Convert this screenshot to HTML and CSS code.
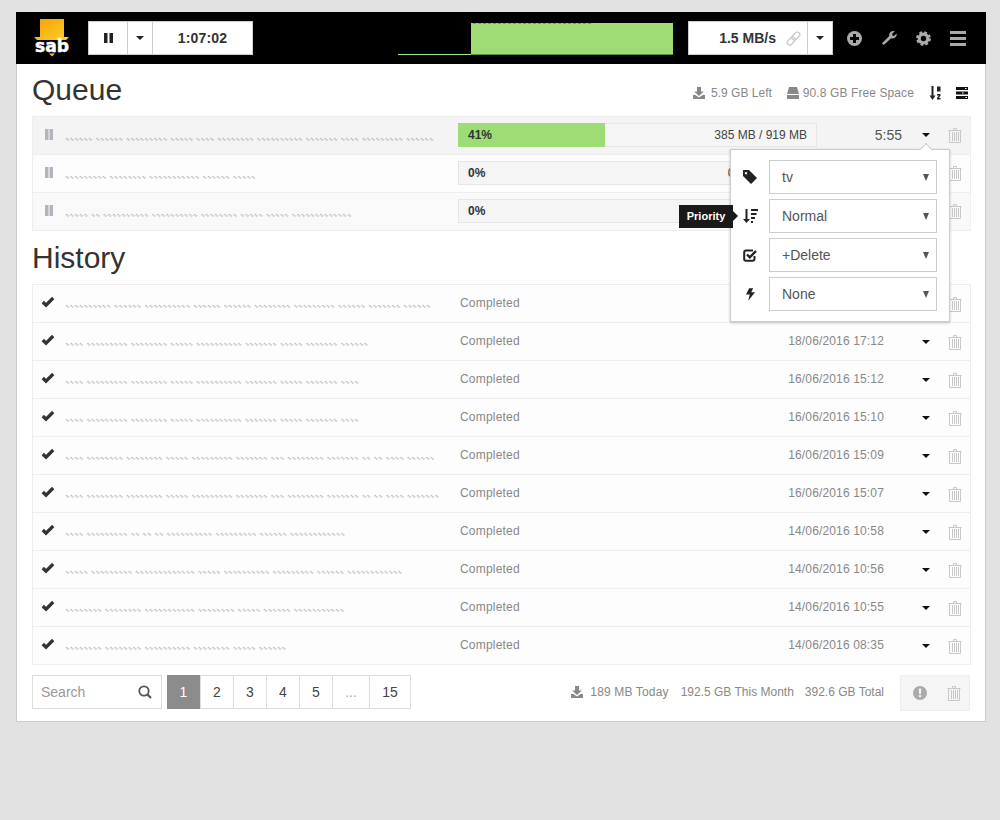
FILE: index.html
```html
<!DOCTYPE html>
<html lang="en">
<head>
<meta charset="utf-8">
<title>SABnzbd</title>
<link rel="stylesheet" href="styles.css">
</head>
<body>
<svg class="defs" width="0" height="0" aria-hidden="true">
  <symbol id="i-trash" viewBox="0 0 14 16"><path d="M5.500 3V1.500h3V3M.5 3.500h13M1.500 4v11.500h11V4M4.500 5v9M6.500 5v9M8.500 5v9M10.500 5v9" fill="none" stroke="currentColor"/></symbol>
  <symbol id="i-caret" viewBox="0 0 8 4"><path d="M0 0h8L4 4z" fill="currentColor"/></symbol>
  <symbol id="i-pause" viewBox="0 0 9 10"><path d="M0 0h3.500v10H0zM5.500 0H9v10H5.500z" fill="currentColor"/></symbol>
  <symbol id="i-qpause" viewBox="0 0 8 11"><path d="M0 0h3.500v11H0zM4.500 0H8v11H4.500z" fill="currentColor"/></symbol>
  <symbol id="i-check" viewBox="0 0 14 12"><path d="M1.800 6 5 9.200 12.200 2" fill="none" stroke="currentColor" stroke-width="3.200"/></symbol>
  <symbol id="i-download" viewBox="0 0 12 12"><path d="M4 0h4v4.500h2.800L6 9 1.200 4.500H4zM0 8h2.500L6 10.500 9.500 8H12v4H0z" fill="currentColor"/></symbol>
</svg>
<div class="app">
  <nav class="nav">
    <div class="logo">
      <svg width="38" height="40" viewBox="0 0 38 40">
        <defs><linearGradient id="g" x1="0" x2="1" y1="0" y2="1"><stop offset="0" stop-color="#f5a200"/><stop offset="1" stop-color="#ffcf2c"/></linearGradient></defs>
        <path d="M6 1h24v18h5l-3 3H3l-3-3h6z" fill="url(#g)"/>
        <rect x="0" y="23" width="36" height="12" fill="#000"/>
        <path d="M15 35.500h6l-3 3z" fill="#ffc21e"/>
        <text class="logo-text" x="1" y="34" textLength="34" lengthAdjust="spacingAndGlyphs">sab</text>
      </svg>
    </div>
    <div class="btn-group">
      <span class="btn btn-pause"><svg width="9" height="10"><use href="#i-pause"/></svg></span>
      <span class="btn btn-caret"><svg width="8" height="4"><use href="#i-caret"/></svg></span>
      <span class="btn btn-time">1:07:02</span>
    </div>
    <svg class="graph" width="276" height="32" viewBox="0 0 276 32"><path d="M73 31.500V0H275v31.500z" fill="#9fdc75"/><path d="M0 31.500h73" stroke="#a6e58f"/><path d="M73 31.500H275" stroke="#5f8f45"/><path d="M75 .5H195" stroke="#6f9f55" stroke-dasharray="3 2"/></svg>
    <div class="btn-group speed">
      <span class="btn btn-speed">1.5 MB/s
        <svg class="link" width="15" height="15" viewBox="0 0 15 15"><g fill="none" stroke="#ccc" stroke-width="1.400"><rect x="7.300" y="0.500" width="5" height="9" rx="2.500" transform="rotate(45 9.800 5)"/><rect x="2.700" y="5.500" width="5" height="9" rx="2.500" transform="rotate(45 5.200 10)"/></g></svg>
      </span>
      <span class="btn btn-caret2"><svg width="8" height="4"><use href="#i-caret"/></svg></span>
    </div>
    <div class="nav-icons">
      <svg width="15" height="15" viewBox="0 0 15 15"><circle cx="7.500" cy="7.500" r="7.500" fill="#aaa"/><path d="M6 3h3v3h3v3H9v3H6V9H3V6h3z" fill="#000"/></svg>
      <svg width="16" height="16" viewBox="0 0 16 16"><path d="M1 13.200 8.300 6c-.7-2.500 1-5 4-5 .5 0 1 .1 1.400.3L11 4l.5 1.500L13 6l2.600-2.600c.6 3.300-2.200 5.800-5.500 4.800L2.800 15z" fill="#aaa"/></svg>
      <svg width="15" height="15" viewBox="0 0 15 15"><circle cx="7.500" cy="7.500" r="4.300" fill="none" stroke="#aaa" stroke-width="3.200"/><circle cx="7.500" cy="7.500" r="6.300" fill="none" stroke="#aaa" stroke-width="2.200" stroke-dasharray="2.800 2.150"/></svg>
      <svg width="16" height="15" viewBox="0 0 16 15"><path d="M0 0h16v3H0zM0 6h16v3H0zM0 12h16v3H0z" fill="#aaa"/></svg>
    </div>
  </nav>
  <main class="main">
    <header class="head">
      <h1>Queue</h1>
      <div class="stats">
        <span class="stat stat-left"><svg width="12" height="12"><use href="#i-download"/></svg>5.9 GB Left</span>
        <span class="stat stat-free"><svg width="12" height="12" viewBox="0 0 12 12"><path d="M2 0h8l2 7H0zM0 8h12v4H0z" fill="currentColor"/></svg>90.8 GB Free Space</span>
        <svg class="sort" width="12" height="14" viewBox="0 0 12 14"><path d="M2.500 0h2v9.500H6.500L3.500 14 .5 9.500h2z" fill="#222"/><path d="M8 .5h3.500v5H8zM8 8h3.500v1.500L9.800 12h1.700v1.500H8v-1.500l1.800-2.500H8z" fill="#222"/></svg>
        <svg class="tasks" width="12" height="12" viewBox="0 0 12 12"><path d="M0 0h12v3H0zM0 4.500h12v3H0zM0 9h12v3H0z" fill="#111"/><path d="M9 1h1.500v1H9zM6 5.500h1.500v1H6zM9.500 10H11v1H9.500z" fill="#fff"/></svg>
      </div>
    </header>

    <section class="rows">
      <div class="row q q-active">
        <svg class="pause" width="8" height="11"><use href="#i-qpause"/></svg>
        <span class="name">∿∿∿∿∿∿ ∿∿∿∿∿∿ ∿∿∿∿∿∿∿∿∿ ∿∿∿∿∿ ∿∿∿∿ ∿∿∿∿∿∿∿∿ ∿∿∿∿∿∿∿∿∿∿ ∿∿∿∿∿∿∿ ∿∿∿∿ ∿∿∿∿∿∿∿∿∿ ∿∿∿∿∿∿</span>
        <div class="bar"><div class="fill"></div><b>41%</b><span>385 MB / 919 MB</span></div>
        <span class="eta">5:55</span>
        <svg class="caret" width="8" height="4"><use href="#i-caret"/></svg>
        <svg class="trash" width="14" height="16"><use href="#i-trash"/></svg>
      </div>
      <div class="row q q-plain">
        <svg class="pause" width="8" height="11"><use href="#i-qpause"/></svg>
        <span class="name">∿∿∿∿∿∿∿∿∿ ∿∿∿∿∿∿∿∿ ∿∿∿∿∿∿∿∿∿∿∿ ∿∿∿∿∿∿ ∿∿∿∿∿</span>
        <div class="bar"><b>0%</b><span>0 MB / 919 MB</span></div>
        <span class="eta"></span>
        <svg class="caret" width="8" height="4"><use href="#i-caret"/></svg>
        <svg class="trash" width="14" height="16"><use href="#i-trash"/></svg>
      </div>
      <div class="row q q-alt">
        <svg class="pause" width="8" height="11"><use href="#i-qpause"/></svg>
        <span class="name">∿∿∿∿∿ ∿∿ ∿∿∿∿∿∿∿∿∿∿ ∿∿∿∿∿∿∿∿∿∿ ∿∿∿∿∿∿∿∿ ∿∿∿∿∿ ∿∿∿∿∿ ∿∿∿∿∿∿∿∿∿∿∿∿∿</span>
        <div class="bar"><b>0%</b><span>0 MB / 1024 MB</span></div>
        <span class="eta"></span>
        <svg class="caret" width="8" height="4"><use href="#i-caret"/></svg>
        <svg class="trash" width="14" height="16"><use href="#i-trash"/></svg>
      </div>
    </section>

    <header class="head head-history"><h1>History</h1></header>

    <section class="rows">
      <div class="row h"><svg class="check" width="14" height="12"><use href="#i-check"/></svg><span class="name">∿∿∿∿∿∿∿∿∿∿ ∿∿∿∿∿∿ ∿∿∿∿∿∿∿∿∿∿ ∿∿∿∿∿∿ ∿∿∿∿∿∿ ∿∿∿∿∿∿∿∿ ∿∿∿∿∿∿∿∿∿ ∿∿∿∿∿∿ ∿∿∿∿∿∿∿ ∿∿∿∿∿∿</span><span class="status">Completed</span><span class="date"></span><svg class="caret" width="8" height="4"><use href="#i-caret"/></svg><svg class="trash" width="14" height="16"><use href="#i-trash"/></svg></div>
      <div class="row h"><svg class="check" width="14" height="12"><use href="#i-check"/></svg><span class="name">∿∿∿∿ ∿∿∿∿∿∿∿∿∿ ∿∿∿∿∿∿∿∿ ∿∿∿∿∿ ∿∿∿∿∿∿∿∿∿∿ ∿∿∿∿∿∿∿ ∿∿∿∿∿ ∿∿∿∿∿∿∿ ∿∿∿∿∿∿</span><span class="status">Completed</span><span class="date">18/06/2016 17:12</span><svg class="caret" width="8" height="4"><use href="#i-caret"/></svg><svg class="trash" width="14" height="16"><use href="#i-trash"/></svg></div>
      <div class="row h"><svg class="check" width="14" height="12"><use href="#i-check"/></svg><span class="name">∿∿∿∿ ∿∿∿∿∿∿∿∿∿ ∿∿∿∿∿∿∿∿ ∿∿∿∿∿ ∿∿∿∿∿∿∿∿∿∿ ∿∿∿∿∿∿∿ ∿∿∿∿∿ ∿∿∿∿∿∿∿ ∿∿∿∿</span><span class="status">Completed</span><span class="date">16/06/2016 15:12</span><svg class="caret" width="8" height="4"><use href="#i-caret"/></svg><svg class="trash" width="14" height="16"><use href="#i-trash"/></svg></div>
      <div class="row h"><svg class="check" width="14" height="12"><use href="#i-check"/></svg><span class="name">∿∿∿∿ ∿∿∿∿∿∿∿∿∿ ∿∿∿∿∿∿∿∿ ∿∿∿∿∿ ∿∿∿∿∿∿∿∿∿∿ ∿∿∿∿∿∿∿ ∿∿∿∿∿ ∿∿∿∿∿∿∿ ∿∿∿∿</span><span class="status">Completed</span><span class="date">16/06/2016 15:10</span><svg class="caret" width="8" height="4"><use href="#i-caret"/></svg><svg class="trash" width="14" height="16"><use href="#i-trash"/></svg></div>
      <div class="row h"><svg class="check" width="14" height="12"><use href="#i-check"/></svg><span class="name">∿∿∿∿ ∿∿∿∿∿∿∿∿ ∿∿∿∿∿∿∿∿ ∿∿∿∿∿ ∿∿∿∿∿∿∿∿∿ ∿∿∿∿∿∿∿ ∿∿∿ ∿∿∿∿∿∿∿∿ ∿∿∿∿∿∿∿ ∿∿ ∿∿ ∿∿∿∿ ∿∿∿∿∿∿</span><span class="status">Completed</span><span class="date">16/06/2016 15:09</span><svg class="caret" width="8" height="4"><use href="#i-caret"/></svg><svg class="trash" width="14" height="16"><use href="#i-trash"/></svg></div>
      <div class="row h"><svg class="check" width="14" height="12"><use href="#i-check"/></svg><span class="name">∿∿∿∿ ∿∿∿∿∿∿∿∿ ∿∿∿∿∿∿∿∿ ∿∿∿∿∿ ∿∿∿∿∿∿∿∿∿ ∿∿∿∿∿∿∿ ∿∿∿ ∿∿∿∿∿∿∿∿ ∿∿∿∿∿∿∿ ∿∿ ∿∿ ∿∿∿∿ ∿∿∿∿∿∿∿</span><span class="status">Completed</span><span class="date">16/06/2016 15:07</span><svg class="caret" width="8" height="4"><use href="#i-caret"/></svg><svg class="trash" width="14" height="16"><use href="#i-trash"/></svg></div>
      <div class="row h"><svg class="check" width="14" height="12"><use href="#i-check"/></svg><span class="name">∿∿∿∿ ∿∿∿∿∿∿∿∿∿ ∿∿ ∿∿ ∿∿ ∿∿∿∿∿∿∿∿∿∿ ∿∿∿∿∿∿∿∿∿ ∿∿∿∿∿∿ ∿∿∿∿∿∿∿∿∿∿∿∿</span><span class="status">Completed</span><span class="date">14/06/2016 10:58</span><svg class="caret" width="8" height="4"><use href="#i-caret"/></svg><svg class="trash" width="14" height="16"><use href="#i-trash"/></svg></div>
      <div class="row h"><svg class="check" width="14" height="12"><use href="#i-check"/></svg><span class="name">∿∿∿∿∿ ∿∿∿∿∿∿∿∿∿ ∿∿∿∿∿∿∿∿∿∿∿∿∿ ∿∿∿∿∿ ∿∿∿∿∿∿∿∿∿∿ ∿∿∿∿∿∿∿∿∿ ∿∿∿∿∿∿ ∿∿∿∿∿∿∿∿∿∿∿∿</span><span class="status">Completed</span><span class="date">14/06/2016 10:56</span><svg class="caret" width="8" height="4"><use href="#i-caret"/></svg><svg class="trash" width="14" height="16"><use href="#i-trash"/></svg></div>
      <div class="row h"><svg class="check" width="14" height="12"><use href="#i-check"/></svg><span class="name">∿∿∿∿∿∿∿∿ ∿∿∿∿∿∿∿∿ ∿∿∿∿∿∿∿∿∿∿∿ ∿∿∿∿∿∿∿∿ ∿∿∿∿∿ ∿∿∿∿∿∿ ∿∿∿∿∿∿∿∿∿∿∿</span><span class="status">Completed</span><span class="date">14/06/2016 10:55</span><svg class="caret" width="8" height="4"><use href="#i-caret"/></svg><svg class="trash" width="14" height="16"><use href="#i-trash"/></svg></div>
      <div class="row h"><svg class="check" width="14" height="12"><use href="#i-check"/></svg><span class="name">∿∿∿∿∿∿∿∿ ∿∿∿∿∿∿∿∿ ∿∿∿∿∿∿∿∿∿∿ ∿∿∿∿∿∿∿∿ ∿∿∿∿∿ ∿∿∿∿∿∿</span><span class="status">Completed</span><span class="date">14/06/2016 08:35</span><svg class="caret" width="8" height="4"><use href="#i-caret"/></svg><svg class="trash" width="14" height="16"><use href="#i-trash"/></svg></div>
    </section>

    <footer class="foot">
      <div class="search"><span>Search</span>
        <svg width="14" height="14" viewBox="0 0 14 14"><circle cx="6" cy="6" r="4.700" fill="none" stroke="#555" stroke-width="1.800"/><path d="M9.500 9.500 13 13" stroke="#555" stroke-width="2.200"/></svg>
      </div>
      <div class="pages">
        <span class="page active">1</span><span class="page">2</span><span class="page">3</span><span class="page">4</span><span class="page">5</span><span class="page dots">...</span><span class="page wide">15</span>
      </div>
      <div class="totals">
        <svg width="12" height="12"><use href="#i-download"/></svg>
        <span class="t1">189 MB Today</span><span class="t2">192.5 GB This Month</span><span class="t3">392.6 GB Total</span>
      </div>
      <div class="tools">
        <svg width="14" height="14" viewBox="0 0 14 14"><circle cx="7" cy="7" r="7" fill="#aaa"/><path d="M5.800 2.500h2.400l-.3 5.500H6.100zM5.900 9h2.200v2.200H5.900z" fill="#f5f5f5"/></svg>
        <svg class="tool-trash" width="14" height="16"><use href="#i-trash"/></svg>
      </div>
    </footer>

    <aside class="popover">
      <div class="pop-row"><svg width="14" height="14" viewBox="0 0 14 14"><path d="M0 0h6l8 8-6 6-8-8zM3 2a1.200 1.200 0 1 0 .01 0z" fill="#222" fill-rule="evenodd"/></svg><div class="select"><span>tv</span><i></i></div></div>
      <div class="pop-row"><svg width="15" height="14" viewBox="0 0 15 14"><path d="M2.500 0h2v10H7l-3.500 4L0 10h2.500z" fill="#222"/><path d="M8 0h7v2H8zM8 4h5.500v2H8zM8 8h4v2H8zM8 12h2v2H8z" fill="#222"/></svg><div class="select"><span>Normal</span><i></i></div></div>
      <div class="pop-row"><svg width="14" height="14" viewBox="0 0 14 14"><path d="M11.500 8v3A1.800 1.800 0 0 1 9.700 12.800H3A1.800 1.800 0 0 1 1.200 11V4.300A1.800 1.800 0 0 1 3 2.500h7" fill="none" stroke="#222" stroke-width="2"/><path d="M4 6.500 6.800 9.300 13 3" fill="none" stroke="#222" stroke-width="2.400"/></svg><div class="select"><span>+Delete</span><i></i></div></div>
      <div class="pop-row"><svg width="9" height="13" viewBox="0 0 10 14"><path d="M3.500 0H8L5.800 4.500H10L2.500 14l1.700-7H0z" fill="#222"/></svg><div class="select"><span>None</span><i></i></div></div>
    </aside>
    <div class="tooltip">Priority</div>
  </main>
</div>
</body>
</html>
```
FILE: styles.css
```css
* { box-sizing: border-box; }
html, body { margin: 0; padding: 0; }
body {
  background: #e2e2e2;
  padding: 12px 0 0 16px;
  font-family: "Liberation Sans", Arial, sans-serif;
  font-size: 12px;
  color: #333;
  min-height: 820px;
}
.defs { position: absolute; }
.app { width: 970px; }

/* navbar */
.nav {
  height: 52px;
  background: #000;
  display: flex;
  align-items: center;
  padding-left: 18px;
}
.logo { width: 54px; height: 40px; }
.logo svg { display: block; overflow: visible; }
.logo-text { font-family: "DejaVu Sans", sans-serif; font-weight: 700; font-size: 17px; fill: #fff; stroke: #fff; stroke-width: .5px; }
.btn-group {
  display: flex;
  height: 34px;
  background: #fff;
  border: 1px solid #ccc;
}
.btn { display: flex; align-items: center; justify-content: center; border-right: 1px solid #ccc; color: #222; }
.btn:last-child { border-right: 0; }
.btn-pause { width: 39px; }
.btn-caret { width: 25px; }
.btn-time { width: 99px; font-size: 14px; font-weight: 700; color: #333; letter-spacing: .2px; }
.graph { margin: 2px 0 0 145px; display: block; }
.speed { margin-left: 14px; }
.btn-speed { width: 119px; justify-content: flex-end; padding-right: 6px; font-size: 14px; font-weight: 700; color: #333; }
.link { margin-left: 10px; }
.btn-caret2 { width: 24px; }
.nav-icons { display: flex; align-items: center; margin-left: 14px; gap: 19px; }

/* main panel */
.main {
  position: relative;
  background: #fff;
  border: 1px solid #ccc;
  border-top: 0;
  height: 658px;
  padding: 0 14px 0 15px;
}
.head { height: 52px; display: flex; justify-content: space-between; align-items: center; }
.head h1 { margin: 0; font-size: 30px; font-weight: 400; color: #333; line-height: 52px; }
.head-history { height: 53px; }
.stats { display: flex; align-items: center; color: #888; font-size: 12px; margin-top: 5px; }
.stat { display: flex; align-items: center; gap: 6px; }
.stat svg { color: #888; }
.stat-free { margin-left: 15px; gap: 4px; letter-spacing: .1px; }
.sort { margin-left: 15px; }
.tasks { margin-left: 15px; margin-right: 3px; }

/* rows */
.rows { border-top: 1px solid #eee; }
.row {
  display: grid;
  height: 38px;
  align-items: center;
  border: 1px solid #eee;
  border-top: 0;
  background: #fdfdfd;
}
.q { grid-template-columns: 32px 393px 359px 85px 39px 29px; padding-bottom: 2px; }
.h { grid-template-columns: 32px 395px 120px 304px 57px 29px; }
.q-active { background: #f4f4f4; }
.q-alt { background: #f9f9f9; }
.pause { color: #b4b4bc; margin-left: 12px; }
.check { color: #333; margin-left: 8px; margin-top: -3px; }
.name {
  font-family: "DejaVu Sans", sans-serif;
  font-size: 5.500px;
  word-spacing: 1px;
  color: #9a9aa2;
  white-space: nowrap;
  overflow: hidden;
  padding-top: 4px;
}
.q .name { padding-top: 8px; }
.bar {
  position: relative;
  height: 24px;
  background: #f5f5f5;
  border: 1px solid #e6e6e6;
  display: flex;
  align-items: center;
  justify-content: space-between;
  padding: 0 9px;
  color: #444;
}
.bar b, .bar span { position: relative; }
.bar b { color: #333; }
.fill { position: absolute; left: -1px; top: -1px; bottom: -1px; width: 147px; background: #9edc75; }
.eta { text-align: right; font-size: 14px; color: #555; }
.caret { color: #111; }
.q .caret { margin-left: 20px; }
.h .caret { margin-left: 38px; }
.trash { color: #c8c8c8; margin-left: 7px; }
.status { color: #888; margin-top: -2px; letter-spacing: .2px; }
.date { color: #888; text-align: right; margin-top: -2px; letter-spacing: .15px; }

/* footer */
.foot { display: flex; align-items: flex-start; margin-top: 10px; }
.search {
  width: 130px;
  height: 34px;
  border: 1px solid #ddd;
  display: flex;
  align-items: center;
  justify-content: space-between;
  padding: 0 9px 0 8px;
  font-size: 14px;
  color: #999;
}
.pages { display: flex; margin-left: 5px; height: 34px; width: 244px; border: 1px solid #ddd; border-left: 0; }
.page {
  width: 33px;
  display: flex;
  align-items: center;
  justify-content: center;
  font-size: 14px;
  color: #444;
  border-right: 1px solid #ddd;
}
.page:last-child { border-right: 0; }
.active { background: #8c8c8c; color: #fff; border-right: 0; margin: -1px 0; }
.active + .page { width: 34px; border-left: 1px solid #ddd; }
.dots { width: 37px; color: #aaa; }
.wide { width: 40px; }
.totals { display: flex; align-items: center; height: 34px; margin-left: auto; color: #888; }
.totals svg { color: #888; }
.t1 { margin-left: 7px; letter-spacing: .15px; }
.t2 { margin-left: 12px; }
.t3 { margin-left: 11px; }
.tools {
  display: flex;
  align-items: center;
  width: 70px;
  height: 36px;
  margin: 0 1px 0 16px;
  background: #f5f5f5;
  border: 1px solid #eee;
  padding-left: 12px;
}
.tool-trash { color: #c8c8c8; margin-left: 20px; }

/* popover */
.popover {
  position: absolute;
  left: 713px;
  top: 85px;
  width: 220px;
  height: 173px;
  background: #fff;
  border: 1px solid #ccc;
  box-shadow: 0 1px 3px rgba(0,0,0,.2);
  padding: 10px 12px 10px 0;
  display: flex;
  flex-direction: column;
  gap: 5px;
}
.popover::before {
  content: "";
  position: absolute;
  right: 18px;
  top: -5px;
  width: 9px;
  height: 9px;
  background: #fff;
  border-left: 1px solid #ccc;
  border-top: 1px solid #ccc;
  transform: rotate(45deg);
}
.pop-row { display: grid; grid-template-columns: 38px 168px; align-items: center; justify-items: center; }
.select {
  justify-self: stretch;
  height: 34px;
  border: 1px solid #ccc;
  display: flex;
  align-items: center;
  justify-content: space-between;
  padding: 0 7px 0 12px;
  font-size: 14px;
  color: #555;
}
.select i { width: 0; height: 0; border: 3.500px solid transparent; border-top: 7px solid #555; border-bottom: 0; }
.tooltip {
  position: absolute;
  left: 662px;
  top: 141px;
  width: 54px;
  height: 23px;
  padding-bottom: 2px;
  background: #1a1a1a;
  color: #fff;
  font-size: 11px;
  font-weight: 700;
  display: flex;
  align-items: center;
  justify-content: center;
}
.tooltip::after {
  content: "";
  position: absolute;
  right: -5px;
  top: 6px;
  border-left: 5px solid #1a1a1a;
  border-top: 5px solid transparent;
  border-bottom: 5px solid transparent;
}
```
